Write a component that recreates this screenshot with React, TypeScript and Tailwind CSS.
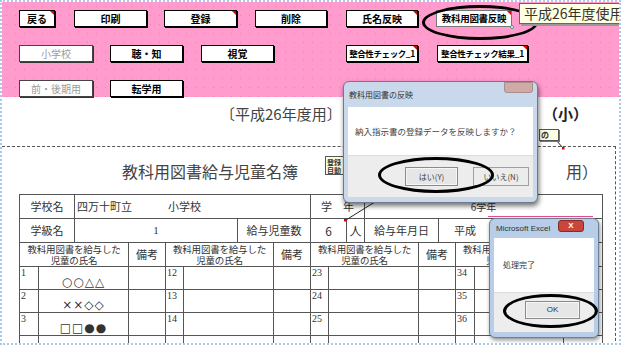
import { Fragment } from "react";
import clsx from "clsx";

type BtnProps = { label: string; cls?: string; red?: boolean; disabled?: boolean; selected?: boolean };

function Btn({ label, cls, red, disabled, selected }: BtnProps) {
  return (
    <div
      className={clsx(
        "relative h-[17px] flex items-center justify-center bg-white leading-none whitespace-nowrap",
        disabled
          ? "border border-[#444] shadow-[1px_1px_0_#333] text-[#9a9a9a]"
          : selected
          ? "border border-[#777] font-bold text-black"
          : "border border-black shadow-[1px_1px_0_#000] font-bold text-black",
        cls
      )}
    >
      {label}
      {red && (
        <span className="absolute right-0 top-0 w-0 h-0 border-t-[4px] border-l-[4px] border-t-[#e00000] border-l-transparent" />
      )}
      {selected && (
        <span className="absolute -right-[3px] -bottom-[3px] w-[4px] h-[4px] rounded-full border border-[#3a9a7a] bg-white" />
      )}
    </div>
  );
}

const cell = "border border-[#555] p-0 text-[#333]";
const num = "border border-[#555] p-0 align-top text-left pl-[1px] text-[10px] leading-[12px] font-['Liberation_Serif',serif] text-[#333]";

const rows: [string, string, string, string, string][] = [
  ["1", "○○△△", "12", "23", "34"],
  ["2", "××◇◇", "13", "24", "35"],
  ["3", "□□●●", "14", "25", "36"],
  ["", "", "", "", ""],
];

const headSpans: [number, number][] = [
  [3, 1],
  [3, 1],
  [4, 2],
  [2, 1],
];

export default function App() {
  return (
    <div className="relative w-[621px] h-[345px] overflow-hidden bg-white border-2 border-dotted border-[#a8c8ee] font-['Noto_Sans_CJK_JP',sans-serif] text-[#222]">
      {/* toolbar */}
      <div className="h-[95px] bg-[#ff9bcd] bg-[radial-gradient(circle,#f47cb2_0.7px,transparent_1px)] bg-[length:9px_9px] pt-[8px] flex flex-col gap-[18px] text-[10px]">
        <div className="flex pl-[17px]">
          <Btn label="戻る" cls="w-[36px]" red />
          <Btn label="印刷" cls="ml-[19px] w-[73px]" />
          <Btn label="登録" cls="ml-[17px] w-[73px]" red />
          <Btn label="削除" cls="ml-[18px] w-[72px]" />
          <Btn label="氏名反映" cls="ml-[19px] w-[72px]" red />
          <Btn label="教科用図書反映" cls="ml-[18px] w-[76px] text-[9.5px] tracking-[-0.3px]" red selected />
        </div>
        <div className="flex pl-[17px]">
          <Btn label="小学校" cls="w-[74px]" disabled />
          <Btn label="聴・知" cls="ml-[17px] w-[73px]" />
          <Btn label="視覚" cls="ml-[18px] w-[73px]" />
          <Btn label="整合性チェック_1" cls="ml-[72px] w-[72px] text-[8.5px] tracking-[-0.4px]" red />
          <Btn label="整合性チェック結果_1" cls="ml-[19px] w-[91px] text-[8.5px] tracking-[-0.3px]" red />
        </div>
        <div className="flex pl-[17px]">
          <Btn label="前・後期用" cls="w-[74px]" disabled />
          <Btn label="転学用" cls="ml-[17px] w-[73px]" />
        </div>
      </div>

      {/* year line */}
      <div className="h-[49px] flex items-start pt-[7px] pl-[218px] text-[15px] leading-[20px] text-[#444] whitespace-nowrap">
        <span className="w-[323px] shrink-0">〔平成26年度用〕</span>
        <span className="font-bold text-[#222]">（小）</span>
      </div>

      {/* print frame */}
      <div className="w-[614px] h-[200px] border-t border-r border-dashed border-[#555] overflow-hidden">
        <div className="h-[47px] flex items-center pl-[120px] text-[16px] leading-none text-[#444] whitespace-nowrap">
          <span className="shrink-0">教科用図書給与児童名簿</span>
          <span className="ml-[268px] shrink-0">用）</span>
        </div>
        <table className="ml-[17px] w-[583px] table-fixed border-collapse text-center">
          <colgroup>
            <col className="w-[19px]" />
            <col className="w-[36px]" />
            <col className="w-[54px]" />
            <col className="w-[37px]" />
            <col className="w-[18px]" />
            <col className="w-[54px]" />
            <col className="w-[36px]" />
            <col className="w-[37px]" />
            <col className="w-[18px]" />
            <col className="w-[18px]" />
            <col className="w-[18px]" />
            <col className="w-[54px]" />
            <col className="w-[20px]" />
            <col className="w-[17px]" />
            <col className="w-[19px]" />
            <col className="w-[89px]" />
            <col className="w-[39px]" />
          </colgroup>
          <tbody>
            <tr className="h-[24px] text-[11px]">
              <td colSpan={2} className={cell}>学校名</td>
              <td colSpan={6} className={clsx(cell, "text-left pl-[2px]")}>
                <span>四万十町立</span>
                <span className="ml-[36px]">小学校</span>
              </td>
              <td colSpan={3} className={cell}>学　年</td>
              <td colSpan={6} className={clsx(cell, "text-[10px]")}>6学年</td>
            </tr>
            <tr className="h-[24px] text-[11px]">
              <td colSpan={2} className={cell}>学級名</td>
              <td colSpan={4} className={clsx(cell, "font-['Liberation_Serif',serif]")}>1</td>
              <td colSpan={2} className={cell}>給与児童数</td>
              <td colSpan={2} className={clsx(cell, "text-[12px]")}>6</td>
              <td className={clsx(cell, "text-[12px]")}>人</td>
              <td colSpan={2} className={cell}>給与年月日</td>
              <td colSpan={4} className={clsx(cell, "text-left pl-[15px] whitespace-nowrap")}>平成　　年　　月　　日</td>
            </tr>
            <tr className="h-[24px]">
              {headSpans.map(([span, bspan], i) => (
                <Fragment key={i}>
                  <td colSpan={span} className={clsx(cell, "text-[9.5px] leading-[11px] tracking-[-0.2px] whitespace-nowrap")}>
                    教科用図書を給与した
                    <br />
                    児童の氏名
                  </td>
                  <td colSpan={bspan} className={clsx(cell, "text-[11px]")}>備考</td>
                </Fragment>
              ))}
            </tr>
            {rows.map(([a, name, b, c, d], i) => (
              <tr key={i} className="h-[23px]">
                <td className={num}>{a}</td>
                <td colSpan={2} className={clsx(cell, "text-[12px] leading-none pt-[7px] font-['DejaVu_Sans',sans-serif] tracking-[1px]")}>{name}</td>
                <td className={cell} />
                <td className={num}>{b}</td>
                <td colSpan={2} className={cell} />
                <td className={cell} />
                <td className={num}>{c}</td>
                <td colSpan={3} className={cell} />
                <td colSpan={2} className={cell} />
                <td className={num}>{d}</td>
                <td className={cell} />
                <td className={cell} />
              </tr>
            ))}
          </tbody>
        </table>
      </div>

      {/* comment connectors */}
      <svg className="absolute left-0 top-0 w-[619px] h-[343px] pointer-events-none" viewBox="0 0 619 343">
        <line x1="554" y1="138" x2="561" y2="146" stroke="#222" strokeWidth="1" />
        <rect x="560" y="145" width="2.5" height="2.5" fill="#e00000" />
        <line x1="376" y1="198" x2="344" y2="218" stroke="#222" strokeWidth="1" />
        <rect x="342" y="217" width="2.5" height="2.5" fill="#e00000" />
        <line x1="486" y1="214.5" x2="591" y2="214.5" stroke="#e0508e" strokeWidth="1.2" />
      </svg>

      {/* comment boxes */}
      <div className="absolute left-[323px] top-[154px] w-[22px] h-[19px] bg-[#ffffe1] border border-[#555] text-[7px] leading-[8px] font-bold text-[#333] pl-[1px] pt-[1px] overflow-hidden">
        登録
        <br />
        自動
      </div>
      <div className="absolute left-[537px] top-[127px] w-[20px] h-[12px] bg-[#ffffe1] border border-[#555] shadow-[1px_1px_0_#777] text-[8px] leading-[10px] font-bold text-[#333] pl-[1px]">
        の
      </div>

      {/* ellipse around selected button */}
      <div className="absolute left-[420px] top-[3px] w-[116px] h-[35px] rounded-[50%] border-[3px] border-black" />

      {/* year tooltip */}
      <div className="absolute left-[517px] top-[1px] w-[106px] h-[21px] bg-[#ffffe1] border border-[#666] shadow-[2px_2px_0_#999] pl-[4px] text-[14px] leading-[19px] text-[#333] whitespace-nowrap">
        平成26年度使用
      </div>

      {/* dialog: confirm */}
      <div className="absolute left-[341px] top-[79px] w-[195px] h-[122px] rounded-[6px] border border-[#707b88] bg-[#c9d8ea] shadow-[1px_3px_5px_rgba(0,0,0,0.55)] flex flex-col px-[4px] pb-[5px]">
        <div className="relative h-[25px] flex items-center">
          <span className="pl-[1px] text-[8px] text-[#333]">教科用図書の反映</span>
          <span className="absolute left-[156px] top-0 w-[29px] h-[11px] rounded-b-[3px] bg-[#cfaaa6] border border-[#a58e8c]" />
        </div>
        <div className="h-[48px] bg-white flex items-center pl-[7px] text-[8.5px] text-[#444]">
          納入指示書の登録データを反映しますか？
        </div>
        <div className="flex-1 bg-[#ededed] border-t border-[#dcdcdc] flex items-start pt-[11px] pl-[57px] gap-[15px]">
          <div className="w-[53px] h-[19px] border border-[#8a8a8a] bg-[#e6e6e6] shadow-[inset_0_0_0_1px_#f6f6f6] flex items-center justify-center text-[8px] text-[#444]">
            はい(Y)
          </div>
          <div className="w-[56px] h-[19px] border border-[#a0a0a0] bg-[#ececec] flex items-center justify-center text-[8px] text-[#444]">
            いいえ(N)
          </div>
        </div>
      </div>
      <div className="absolute left-[376px] top-[155px] w-[116px] h-[36px] rounded-[50%] border-[3px] border-black" />

      {/* dialog: done */}
      <div className="absolute left-[487px] top-[216px] w-[110px] h-[120px] rounded-[6px] border border-[#6f7e90] bg-[#b7cde8] shadow-[1px_2px_4px_rgba(0,0,0,0.45)] flex flex-col px-[4px] pb-[5px]">
        <div className="relative h-[19px] flex items-center">
          <span className="pl-[2px] text-[8px] text-[#333] font-['Liberation_Sans',sans-serif]">Microsoft Excel</span>
          <span className="absolute left-[64px] top-[1px] w-[26px] h-[12px] rounded-[3px] bg-[#c9463d] border border-[#8a2a25] flex items-center justify-center text-[8px] leading-none font-bold text-white font-['Liberation_Sans',sans-serif]">
            X
          </span>
        </div>
        <div className="h-[54px] bg-white flex items-center pl-[9px] text-[8px] text-[#333]">処理完了</div>
        <div className="flex-1 bg-[#ededed] border-t border-[#dcdcdc] pt-[8px] pl-[31px]">
          <div className="w-[55px] h-[18px] border border-[#8a8a8a] bg-[#e6e6e6] shadow-[inset_0_0_0_1px_#f6f6f6] flex items-center justify-center text-[8px] text-[#333] font-['Liberation_Sans',sans-serif]">
            OK
          </div>
        </div>
      </div>
      <div className="absolute left-[501px] top-[292px] w-[95px] h-[34px] rounded-[50%] border-[3px] border-black" />
    </div>
  );
}
